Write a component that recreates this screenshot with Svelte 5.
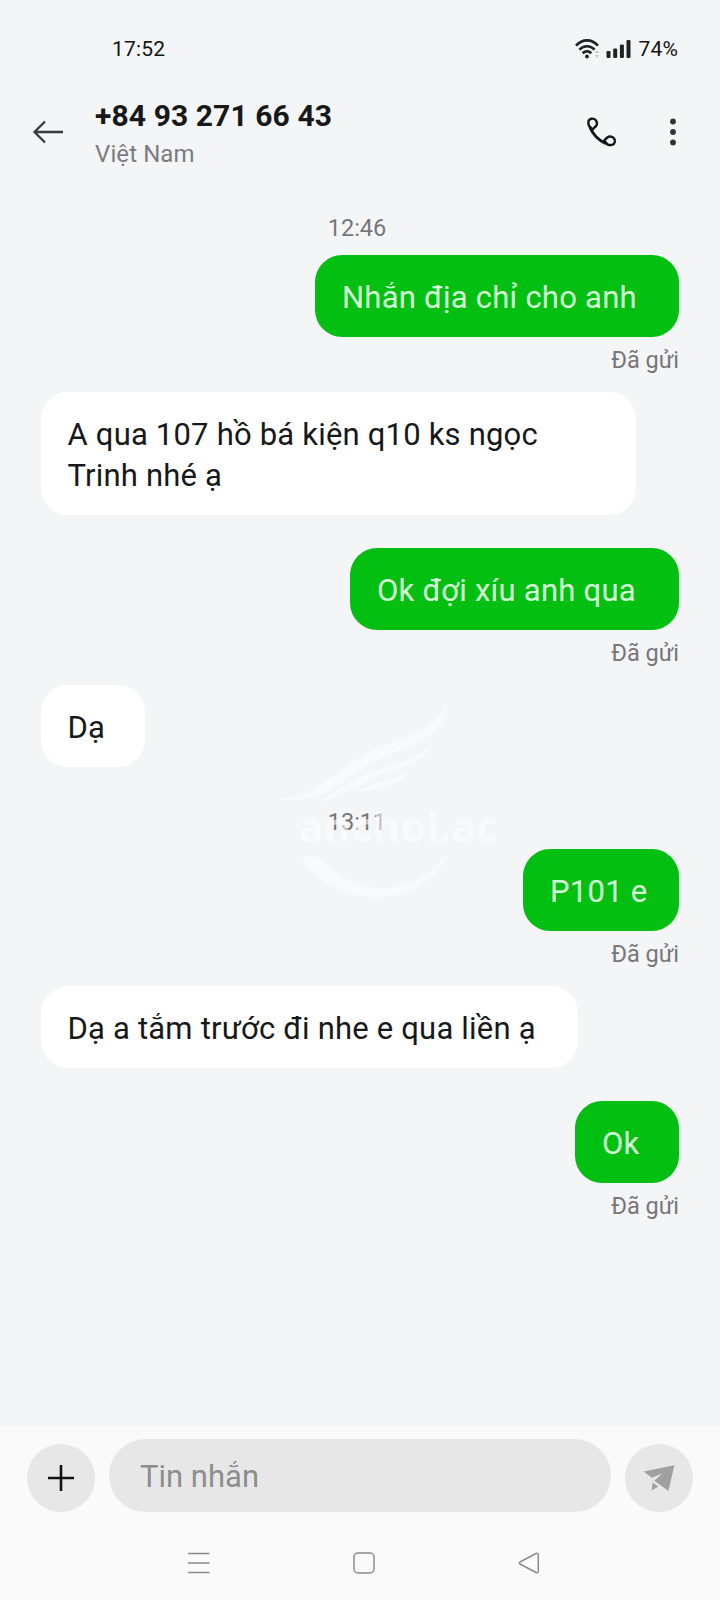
<script lang="ts">
	interface Message {
		kind: 'sent' | 'received' | 'time';
		text: string;
		width?: number;
	}

	const contact = { number: '+84 93 271 66 43', country: 'Việt Nam' };

	const messages: Message[] = [
		{ kind: 'time', text: '12:46' },
		{ kind: 'sent', text: 'Nhắn địa chỉ cho anh', width: 364 },
		{ kind: 'received', text: 'A qua 107 hồ bá kiện q10 ks ngọc Trinh nhé ạ', width: 595 },
		{ kind: 'sent', text: 'Ok đợi xíu anh qua', width: 329 },
		{ kind: 'received', text: 'Dạ', width: 104 },
		{ kind: 'time', text: '13:11' },
		{ kind: 'sent', text: 'P101 e', width: 156 },
		{ kind: 'received', text: 'Dạ a tắm trước đi nhe e qua liền ạ', width: 537 },
		{ kind: 'sent', text: 'Ok', width: 104 }
	];

	let draft = $state('');
</script>

<div class="screen">
	<div class="status-bar">
		<span>17:52</span>
		<div class="status-icons">
			<svg width="26" height="20" viewBox="0 0 26 20" fill="none">
				<g stroke="#222" stroke-width="2.7">
					<path d="M1 6.7C7.4-.3 16.6-.3 23 6.7" />
					<path d="M4.4 10.6c4.3-4.500 10.900-4.500 15.200 0" />
					<path d="M7.7 14.2c2.5-2.600 6.100-2.600 8.600 0" />
				</g>
				<circle cx="12" cy="17.5" r="1.9" fill="#222" />
				<path d="M20 14l2-3 2 3zM20 16l2 3 2-3z" fill="#c8c8c8" />
			</svg>
			<svg class="signal" width="25" height="18" viewBox="0 0 25 18" fill="#222">
				<rect x="0.5" y="11" width="4" height="7" rx="1.2" />
				<rect x="7.2" y="8.5" width="4" height="9.5" rx="1.2" />
				<rect x="13.9" y="4.5" width="4" height="13.5" rx="1.2" />
				<rect x="20.5" y="0" width="4" height="18" rx="1.2" />
			</svg>
			<span>74%</span>
		</div>
	</div>

	<header class="header">
		<button class="icon-btn back" aria-label="Back">
			<svg width="32" height="24" viewBox="0 0 32 24" fill="none" stroke="#3a3a3e" stroke-width="2.3">
				<path d="M31 12H2.5M13 1.5 2.5 12 13 22.5" />
			</svg>
		</button>
		<div class="contact">
			<h1>{contact.number}</h1>
			<p>{contact.country}</p>
		</div>
		<button class="icon-btn call" aria-label="Call">
			<svg width="32" height="32" viewBox="0 0 32 32" fill="none" stroke="#141414" stroke-width="2.4" stroke-linejoin="round">
				<path d="M4.2 10C2.6 6.800 3 3.300 6.500 2.700 10.300 2.200 12.400 5.500 11.900 8.200 11.400 10.500 9.500 11.300 7.500 13.500z" />
				<path d="M19.200 24.500C21.200 22.500 22 20.900 24.300 20.500 27.700 20.200 30.500 22.500 29.900 25.700 29.200 29 25.800 29.800 22.300 28.300z" />
				<path d="M4.800 11C7.800 18 14 24.600 21 27.500" stroke-width="3" />
			</svg>
		</button>
		<button class="icon-btn more" aria-label="More options">
			<svg width="6" height="28" viewBox="0 0 6 28" fill="#333">
				<circle cx="3" cy="3.5" r="2.9" />
				<circle cx="3" cy="14" r="2.9" />
				<circle cx="3" cy="24.5" r="2.9" />
			</svg>
		</button>
	</header>

	<main class="thread">
		{#each messages as message}
			{#if message.kind === 'time'}
				<div class="time">{message.text}</div>
			{:else}
				<div class="message {message.kind}">
					<div class="bubble" style="width: {message.width}px">{message.text}</div>
					{#if message.kind === 'sent'}
						<span class="delivery">Đã gửi</span>
					{/if}
				</div>
			{/if}
		{/each}
	</main>

	<footer class="composer">
		<button class="round-btn" aria-label="Add attachment">
			<svg width="26" height="26" viewBox="0 0 26 26" stroke="#141414" stroke-width="2.6">
				<path d="M0 13h26M13 0v26" />
			</svg>
		</button>
		<input type="text" placeholder="Tin nhắn" bind:value={draft} />
		<button class="round-btn" aria-label="Send">
			<svg width="32" height="28" viewBox="0 0 32 28" fill="#a0a0a0">
				<path d="M.7 7.5 31.300 1.300 25.500 27 11.300 16.800 19.300 9.500 8.800 13.700z" />
				<path d="M9.600 18.500 15.200 22.500 8.800 26.500z" />
			</svg>
		</button>
	</footer>

	<nav class="nav-bar">
		<svg width="22" height="22" viewBox="0 0 22 22" stroke="#8b8b8b" stroke-width="1.6">
			<path d="M0 1.5h21.500M0 11h21.500M0 20.500h21.500" />
		</svg>
		<svg width="22" height="22" viewBox="0 0 22 22" fill="none" stroke="#8b8b8b" stroke-width="1.5">
			<rect x="1" y="1" width="20" height="20" rx="4" />
		</svg>
		<svg width="22" height="22" viewBox="0 0 22 22" fill="none" stroke="#8b8b8b" stroke-width="1.5" stroke-linejoin="round">
			<path d="M2 10 18 1.500Q20.300.8 20.300 3v16q0 2.200-2.300 1.500L2 12q-1.500-1 0-2z" />
		</svg>
	</nav>

	<div class="watermark">
		<svg width="230" height="200" viewBox="0 0 230 200" fill="#fff">
			<path d="M0 98C28 99 42 89 62 75 81 61 96 50 117 43 145 33 171 21 176 0 177 23 161 36 139 45 111 56 91 65 73 80 48 98 29 102 0 98z" />
			<path d="M45 102C69 88 83 77 106 69 127 63 146 58 159 44 158 57 139 64 118 71 93 79 75 95 45 102z" />
			<path d="M85 91c17-10 40-12 54-22-3 14-29 18-54 22z" />
			<path d="M31 159C31 154 42 153 50 159 89 197 132 193 163 167 168 162 171 156 176 155 156 203 73 215 31 159z" />
		</svg>
		<span>anchoi.ac</span>
	</div>
</div>

<style>
	:global(body) {
		margin: 0;
	}

	.screen {
		position: relative;
		display: flex;
		flex-direction: column;
		box-sizing: border-box;
		width: 720px;
		height: 1600px;
		overflow: hidden;
		background: #f3f5f7;
		color: #17181a;
		font-family: Roboto, 'Noto Sans', sans-serif;
	}

	.status-bar {
		display: flex;
		justify-content: space-between;
		align-items: center;
		height: 97px;
		padding: 0 42px 0 112px;
		box-sizing: border-box;
		font-size: 21px;
		letter-spacing: 0.2px;
		color: #141414;
	}

	.status-icons {
		display: flex;
		align-items: center;
	}

	.signal {
		margin: 0 7px 0 5px;
	}

	.header {
		display: flex;
		align-items: center;
		height: 70px;
		padding: 0 44px 0 32px;
	}

	.icon-btn {
		display: flex;
		padding: 0;
		border: none;
		background: none;
		cursor: pointer;
	}

	.contact {
		flex: 1;
		margin-left: 31px;
		padding-top: 4px;
	}

	.contact h1 {
		margin: 0;
		font-size: 30px;
		font-weight: 700;
		line-height: 38px;
		letter-spacing: 0.1px;
	}

	.contact p {
		margin: 1px 0 0;
		font-size: 24px;
		line-height: 36px;
		letter-spacing: 0.1px;
		color: #7b7c7e;
	}

	.more {
		margin-left: 53px;
	}

	.thread {
		flex: 1;
		padding: 44px 41px 0 41px;
	}

	.time {
		height: 44px;
		padding-right: 6px;
		font-size: 23.5px;
		line-height: 34px;
		text-align: center;
		color: #76777a;
	}

	.message + .time {
		margin-top: 38px;
	}

	.message {
		display: flex;
		flex-direction: column;
		align-items: flex-start;
	}

	.message.sent {
		align-items: flex-end;
	}

	.message.received {
		margin-bottom: 33px;
	}

	.bubble {
		box-sizing: border-box;
		padding: 22px 34px 19px 26.5px;
		border-radius: 27px;
		background: #fff;
		font-size: 31px;
		line-height: 41px;
		letter-spacing: 0.2px;
	}

	.sent .bubble {
		padding-left: 27px;
		background: #03bf12;
		color: #d5ffd6;
		letter-spacing: 0.25px;
		white-space: nowrap;
	}

	.delivery {
		height: 55px;
		font-size: 23.5px;
		line-height: 47px;
		color: #76777a;
	}

	.composer {
		display: flex;
		align-items: flex-end;
		gap: 14px;
		height: 86px;
		padding: 0 27px;
		background: #fafafa;
	}

	.round-btn {
		display: flex;
		align-items: center;
		justify-content: center;
		flex: none;
		width: 68px;
		height: 68px;
		padding: 0;
		border: none;
		border-radius: 50%;
		background: #e7e7e7;
		cursor: pointer;
	}

	.composer input {
		flex: 1;
		min-width: 0;
		height: 73px;
		box-sizing: border-box;
		padding: 2px 31px 0;
		border: none;
		border-radius: 37px;
		outline: none;
		background: #e7e7e7;
		font: inherit;
		font-size: 31px;
	}

	.composer input::placeholder {
		color: #8d8d8d;
	}

	.nav-bar {
		display: flex;
		justify-content: space-between;
		height: 88px;
		padding: 40px 180px 0 188px;
		box-sizing: border-box;
		background: #fafafa;
	}

	/* Site mark laid over the conversation */
	.watermark {
		position: absolute;
		top: 701px;
		left: 271px;
		opacity: 0.55;
		pointer-events: none;
	}

	.watermark span {
		position: absolute;
		top: 96px;
		left: 27px;
		font-family: 'Open Sans', sans-serif;
		font-size: 42px;
		font-weight: 700;
		color: #fff;
	}
</style>
